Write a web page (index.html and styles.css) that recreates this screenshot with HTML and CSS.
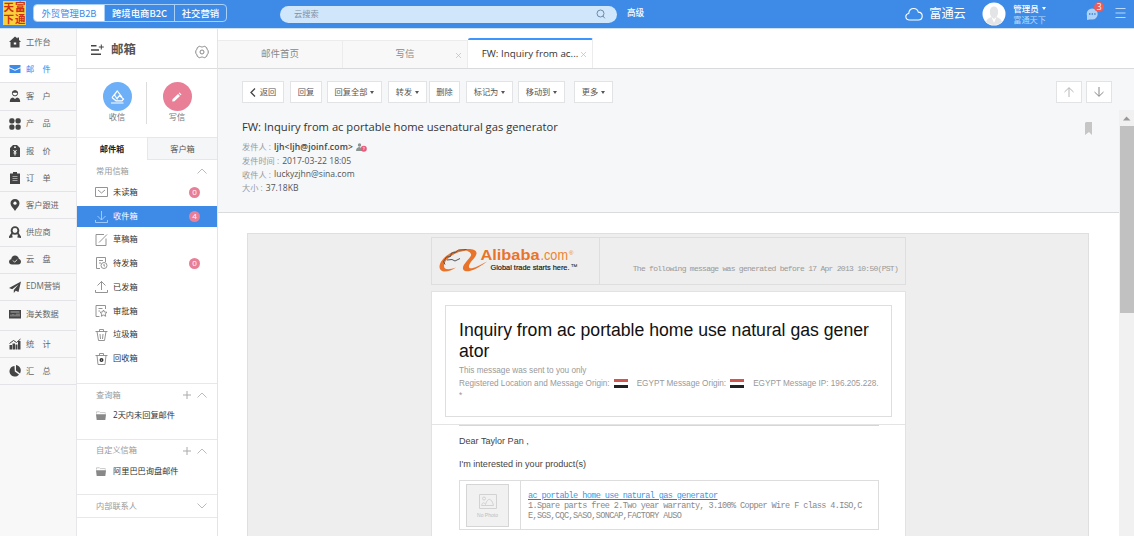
FILE: index.html
```html
<!DOCTYPE html>
<html lang="zh-CN">
<head>
<meta charset="utf-8">
<title>邮箱</title>
<link rel="stylesheet" href="styles.css">
</head>
<body>
<header class="top">
  <div class="brand"><span>天</span><span>富</span><span>下</span><span>通</span></div>
  <nav class="modes"><a class="mode m1 on">外贸管理B2B</a><a class="mode m2">跨境电商B2C</a><a class="mode m3">社交营销</a></nav>
  <div class="search"><span>云搜索</span><svg width="10" height="10" viewBox="0 0 10 10" fill="none" stroke="#6f8ba8"><circle cx="4.5" cy="4.5" r="3.5"/><path d="M6.8 6.8 8.8 9.3"/></svg></div>
  <span class="adv">高级</span>
  <svg class="cloud" width="18" height="14" viewBox="0 0 18 14" fill="none" stroke="#fff" stroke-width="1.1"><path d="M4.5 13C2.3 13 .8 11.700.8 9.700.8 7.900 2 6.700 3.700 6.500 4 3.700 6 1.500 8.700 1.500c2.300 0 4 1.400 4.600 3.600 2.400.1 3.900 1.700 3.900 3.900 0 2.400-1.600 4-3.900 4z"/></svg>
  <span class="cloudname">富通云</span>
  <svg class="avatar" width="24" height="24" viewBox="0 0 24 24"><circle cx="12" cy="12" r="11.500" fill="#fff"/><path d="M4 20c1-3.500 4-4.300 5.500-5C7 12 7 4.500 12 4.500s5 7.500 2.500 10.500c1.500.7 4.500 1.500 5.500 5-4 4-12 4-16 0z" fill="#e3e4e6"/><path d="m9.500 15 2.500 6 2.500-6-2.500 2z" fill="#fff"/></svg>
  <div class="user"><b>管理员<i class="caret"></i></b><span>富通天下</span></div>
  <div class="msg"><svg width="13" height="13" viewBox="0 0 13 13"><circle cx="6.200" cy="6" r="5.500" fill="#aed3f8"/><path d="M1 7v5l5-1z" fill="#aed3f8"/><path d="M3 6h1.400M5.600 6H7M8.200 6h1.400" stroke="#3d7fd0" stroke-width="1.400"/></svg><em>3</em></div>
  <svg class="burger" width="11" height="12" viewBox="0 0 11 12" stroke="#b9dafb"><path d="M.5 1.500h10M.5 6h10M.5 10.500h10"/></svg>
</header>
<div class="app">
  <nav class="side">
    <a><svg viewBox="0 0 12 12"><path d="M6 .5 0 6h1.500v5.500h9V6H12L10 4V1.500H8.500v1z"/><path d="M4.800 6.500h2.400v2H4.800z" fill="#fff"/></svg>工作台</a>
    <a class="on"><svg viewBox="0 0 12 12"><path d="M.5 2h11v2.200L6 6.800.5 4.200z"/><path d="M.5 5.200 6 7.800l5.500-2.600V10H.5z"/></svg>邮　件</a>
    <a><svg viewBox="0 0 12 12"><circle cx="6" cy="3.300" r="2.600" fill="#fff" stroke="#444"/><path d="M3.200 3C3-.3 9-.3 8.800 3 7 3 6 2.500 3.200 3zM.8 12c0-3 1-4.300 3.200-4.600L6 9l2-1.600c2.200.3 3.200 1.600 3.200 4.600z"/></svg>客　户</a>
    <a><svg viewBox="0 0 12 12"><rect x=".3" y=".3" width="5.200" height="5.200" rx="1.900"/><rect x="6.500" y=".3" width="5.200" height="5.200" rx="1.900"/><rect x=".3" y="6.500" width="5.200" height="5.200" rx="1.900"/><rect x="6.500" y="6.500" width="5.200" height="5.200" rx="1.900"/></svg>产　品</a>
    <a><svg viewBox="0 0 12 12"><path d="M1 3 4 0h4l3 3v9H1z"/><circle cx="6" cy="2.200" r=".9" fill="#fff"/><path d="m4.500 5 1.500 2 1.500-2M6 7v3.500M4.500 8h3" stroke="#fff" fill="none"/></svg>报　价</a>
    <a><svg viewBox="0 0 12 12"><path d="M1 1.500h3V0h4v1.500h3V12H1z"/><path d="M3.500 4.500h5M3.500 6.500h5M3.500 8.500h5" stroke="#bbb" stroke-width=".8"/></svg>订　单</a>
    <a><svg viewBox="0 0 12 12"><path d="M6 0C3.300 0 1.500 1.900 1.500 4.300 1.500 7 4 9 6 12c2-3 4.500-5 4.500-7.700C10.500 1.900 8.700 0 6 0z"/><circle cx="6" cy="4.200" r="1.600" fill="#fff"/></svg>客户跟进</a>
    <a><svg viewBox="0 0 12 12" fill="none" stroke="#444" stroke-width="1.900"><circle cx="6" cy="4.500" r="3.400"/><path d="M3.400 7 1 10.800l2.500-.3M8.600 7l2.400 3.800-2.500-.3"/></svg>供应商</a>
    <a><svg viewBox="0 0 12 12"><path d="M3 10.500C1.200 10.500 0 9.300 0 7.800c0-1.400.9-2.400 2.200-2.600C2.400 3 4 1.500 6 1.500s3.600 1.300 3.900 3.500C11.200 5.200 12 6.300 12 7.700c0 1.600-1.200 2.800-2.900 2.800z"/><path d="m4 6.500 1.600 1.700L8.300 5.500" stroke="#ddd" fill="none"/></svg>云　盘</a>
    <a><svg viewBox="0 0 12 12"><path d="M12 .5 0 7l3.200 1.200L9.500 3.500 4.800 9v3l1.900-2.200L9.500 11z"/></svg>EDM营销</a>
    <a class="tall"><svg viewBox="0 0 12 12"><path d="M0 2h12v8.500H0z"/><path d="M1.500 4h9M2 8.500V6.500M4 8.500V6M6 8.500V6.500M8 8.500v-3M10 8.500v-3" stroke="#ccc" stroke-width=".8"/></svg>海关数据</a>
    <a><svg viewBox="0 0 12 12"><path d="M.5 7H3v4.500H.5zM3.500 5.500H6v6H3.500zM6.500 6.500h2v5h-2zM9 3h2.500v8.500H9z"/><path d="m.5 5.500 4-3 3 2 4-3.500" fill="none" stroke="#444"/></svg>统　计</a>
    <a><svg viewBox="0 0 12 12"><path d="M5.500 1A5.300 5.300 0 1 0 10 9.500L5.800 6.500z"/><path d="M7 0v5.500l4 3C13 5 11 .5 7 0z"/></svg>汇　总</a>
  </nav>
  <section class="box">
    <div class="boxhead"><svg width="14" height="12" viewBox="0 0 14 12" stroke="#444" stroke-width="1.500" fill="none"><path d="M0 1.800h5.500M0 6h8M0 10.200h10"/><path d="M10.300.5v5M7.800 3h5" stroke-width="1"/></svg><h1>邮箱</h1><svg class="gear" width="14" height="14" viewBox="0 0 14 14" fill="none" stroke="#888"><path d="m4.300 1.300 1.200.3c1 .5 2 .5 3 0l1.200-.3 2 1.400.4 1.500 1.100 1.600v2.400l-1.100 1.600-.4 1.500-2 1.400-1.200-.3c-1-.5-2-.5-3 0l-1.200.3-2-1.400-.4-1.500L.8 8.200V5.800l1.100-1.600.4-1.500z"/><circle cx="7" cy="7" r="2"/></svg></div>
    <div class="acts">
      <div class="act recv"><i><svg width="16" height="16" viewBox="0 0 16 16" fill="none" stroke="#fff" stroke-width="1.200"><path d="M3 8.500 8.200 2l4.800 6M8.200 2 5.500 6l3 4.500M3 8.500l4 3.300h6L14.500 10l-4-3.500L8 9.500M2 14h12.500"/></svg></i>收信</div>
      <div class="act send"><i><svg width="12" height="12" viewBox="0 0 12 12" fill="#fff"><path d="M1.500 8.300 7 3l2 2-5.500 5.300-2.300.3zM7.700 2.300l.8-.8 2 2-.8.8z"/></svg></i>写信</div>
    </div>
    <div class="boxtabs"><b>邮件箱</b><span>客户箱</span></div>
    <div class="grp"><span>常用信箱</span><svg class="chev" viewBox="0 0 10 6"><path d="M.5 5.500 5 1l4.500 4.500"/></svg></div>
    <ul class="list">
      <li><svg viewBox="0 0 13 12"><path d="M.5 1.500h12v9H.5zM3 4l3.500 3L10 4"/></svg>未读箱<em>0</em></li>
      <li class="on"><svg viewBox="0 0 13 12"><path d="M6.500 0v9M2.500 5l4 4 4-4M.5 9v2.500h12V9"/></svg>收件箱<em>4</em></li>
      <li><svg viewBox="0 0 13 12"><path d="M9 .5H1v11h10V4.500M4 8.500l8-8"/></svg>草稿箱</li>
      <li><svg viewBox="0 0 13 12"><path d="M5 11.500H1.500V.5h9V5M4 3.500h4M4 6h2"/><circle cx="9" cy="8.500" r="3"/><path d="M9 7v2h1"/></svg>待发箱<em>0</em></li>
      <li><svg viewBox="0 0 13 12"><path d="M6.500 9V.5M2.500 4.500l4-4 4 4M.5 9v2.500h12V9"/></svg>已发箱</li>
      <li><svg viewBox="0 0 13 12"><path d="M4.500 11.500H1V.5h9.500V4M3.500 3.500h4M3.500 6h1.500M8.500 5l1 2 2.500.3-1.800 1.600.5 2.400-2.200-1.200-2.200 1.200.5-2.400L5 7.300 7.500 7z"/></svg>审批箱</li>
      <li><svg viewBox="0 0 13 12"><path d="M.5 2.500h12M4.500 2.500v-2h4v2M2 2.500l1.500 9h6l1.500-9M5 5l.5 5M8 5l-.5 5"/></svg>垃圾箱</li>
      <li><svg viewBox="0 0 13 12"><path d="M.5 2.500h12M4.500 2.500v-2h4v2M2 2.500l1 9h7l1-9"/><circle cx="6.500" cy="7" r="1.300" stroke="#333" stroke-width="1.400"/></svg>回收箱</li>
    </ul>
    <div class="custom">
      <div class="grp"><span>查询箱</span><svg class="plus" viewBox="0 0 8 8"><path d="M4 0v8M0 4h8"/></svg><svg class="chev" viewBox="0 0 10 6"><path d="M.5 5.500 5 1l4.500 4.500"/></svg></div>
      <div class="fold"><svg viewBox="0 0 10 9"><path d="M.5 2.500V.8h3l.8.8h5v1" fill="none" stroke="#bbb" stroke-width=".8"/><path d="M0 3.200h10L9.300 9H.7z" fill="#888"/></svg>2天内未回复邮件</div>
    </div>
    <div class="custom">
      <div class="grp"><span>自定义信箱</span><svg class="plus" viewBox="0 0 8 8"><path d="M4 0v8M0 4h8"/></svg><svg class="chev" viewBox="0 0 10 6"><path d="M.5 5.500 5 1l4.500 4.500"/></svg></div>
      <div class="fold"><svg viewBox="0 0 10 9"><path d="M.5 2.500V.8h3l.8.8h5v1" fill="none" stroke="#bbb" stroke-width=".8"/><path d="M0 3.200h10L9.300 9H.7z" fill="#888"/></svg>阿里巴巴询盘邮件</div>
    </div>
    <div class="custom last"><div class="grp"><span>内部联系人</span><svg class="chev" viewBox="0 0 10 6"><path d="M.5.500 5 5 9.500.5"/></svg></div></div>
  </section>
  <main class="main">
    <div class="tabs"><div class="tab">邮件首页</div><div class="tab">写信<svg viewBox="0 0 5 5"><path d="m0 0 5 5M5 0 0 5"/></svg></div><div class="tab on"><span>FW: Inquiry from ac...</span><svg viewBox="0 0 5 5"><path d="m0 0 5 5M5 0 0 5"/></svg></div></div>
    <div class="tools">
      <a class="b1"><svg width="6" height="9" viewBox="0 0 6 9" fill="none" stroke="#444" stroke-width="1.300"><path d="M5 .5 1 4.500l4 4"/></svg>返回</a><a class="b2">回复</a><a class="b3">回复全部<i class="caret"></i></a><a class="b4">转发<i class="caret"></i></a><a class="b5">删除</a><a class="b6">标记为<i class="caret"></i></a><a class="b7">移动到<i class="caret"></i></a><a class="b8">更多<i class="caret"></i></a>
      <a class="nav up"><svg viewBox="0 0 10 10"><path d="M5 10V.8M.5 5 5 .7 9.500 5"/></svg></a><a class="nav"><svg viewBox="0 0 10 10"><path d="M5 0v9.200M.5 5 5 9.300 9.500 5"/></svg></a>
    </div>
    <div class="pane">
      <div class="scroll">
        <div class="mhead">
          <svg class="mark" viewBox="0 0 7 13"><path d="M1 0h6v13l-3-3-4 3V1z" fill="#c6c6c6"/></svg>
          <h2>FW: Inquiry from ac portable home usenatural gas generator</h2>
          <p>发件人 : <b>ljh&lt;ljh@joinf.com&gt;</b><svg width="11" height="9" viewBox="0 0 11 9"><circle cx="3.500" cy="2" r="1.700" fill="#8b9590"/><path d="M0 8c0-3 2-4 3.500-4L6 5.500V8z" fill="#8b9590"/><circle cx="7.800" cy="5.700" r="3" fill="#ea5a7c"/><path d="M7 5c0-1 1.700-1 1.500 0l-.7.800v1" stroke="#fff" stroke-width=".6" fill="none"/></svg></p>
          <p>发件时间 : <span>2017-03-22 18:05</span></p>
          <p>收件人 : <span>luckyzjhn@sina.com</span></p>
          <p>大小 : <span>37.18KB</span></p>
        </div>
        <div class="mail">
          <div class="banner">
            <div class="logo"><svg width="150" height="46" viewBox="0 0 150 46">
              <path d="M35 12.500C24 8.500 8 20 7.500 28.500c0 7 9 6 16.500 1-7 2.500-12 2.500-12-1.500C12 22 22 13.500 35 12.500z" fill="#e8742c"/>
              <path d="M31 11.200c8-1 14 .3 13.500 4.300-.5 4.500-8 9-7.500 13.500.3 3.500 9-.5 18-5.500-9 7-20 12.500-23.500 8.500-3-4.500 6-10.500 7.500-14.500.8-3-3-4.500-8-6.300z" fill="#e8742c"/>
              <path d="M13 26.500l-1.500-3 3-4.500 4-.5 1-3.500 4-.5 3-2.500 8-.5M15 22l5-.5 3 1.500 5-2.500" stroke="#555" fill="none" stroke-width="1"/>
              <text x="48.500" y="21.500" class="ali" textLength="59" lengthAdjust="spacingAndGlyphs">Alibaba</text><text x="108.500" y="21.500" class="com" textLength="27.500" lengthAdjust="spacingAndGlyphs">.com</text><text x="137" y="17" class="reg">®</text>
              <text x="58.500" y="32" class="slogan" textLength="79" lengthAdjust="spacingAndGlyphs">Global trade starts here.</text><text x="138.500" y="31" class="tm">™</text></svg></div>
            <div class="gen">The following message was generated before 17 Apr 2013 10:50(PST)</div>
          </div>
          <div class="letter">
            <div class="intro">
              <h3>Inquiry from ac portable home use natural gas gener<br>ator</h3>
              <p>This message was sent to you only</p>
              <p class="loc"><span>Registered Location and Message Origin:</span><i class="flag"></i><span>EGYPT Message Origin:</span><i class="flag"></i><span>EGYPT Message IP: 196.205.228.</span></p>
              <p>*</p>
            </div>
            <div class="body">
              <p class="dear">Dear Taylor Pan ,</p>
              <p class="int">I'm interested in your product(s)</p>
              <div class="prod">
                <div class="ph"><div><svg width="18" height="15" viewBox="0 0 18 15" fill="none" stroke="#d2d2d2"><path d="M.5.500h17v14H.5zM2.500 11.500c1-4 3-3 4-1 2-7 6-7 8 1z"/><circle cx="5" cy="4.500" r="1.500"/></svg><span>No Photo</span></div></div>
                <div class="desc"><a>ac portable home use natural gas generator</a><br>1.Spare parts free 2.Two year warranty, 3.100% Copper Wire F class 4.ISO,C<br>E,SGS,CQC,SASO,SONCAP,FACTORY AUSO</div>
              </div>
            </div>
          </div>
        </div>
      </div>
      <div class="bar"><svg width="15" height="16" viewBox="0 0 15 16"><path d="M4 10.500 7.500 6.500l4 4z" fill="#999"/></svg><i></i></div>
    </div>
  </main>
</div>
</body>
</html>
```
FILE: styles.css
```css
* { box-sizing: border-box; }
body, h1, h2, h3, p, ul { margin: 0; padding: 0; font-weight: normal; }
i, em { font-style: normal; }
svg { display: block; flex: none; }
body {
  width: 1134px; height: 536px; overflow: hidden; background: #fff; color: #555;
  font: 8.2px/1.3 "Open Sans", "Noto Sans CJK SC", sans-serif;
}
.caret { display: inline-block; border: 2.500px solid transparent; border-top: 3px solid currentColor; border-bottom: 0; margin-left: 3px; }

/* Top bar */
.top { display: flex; align-items: center; height: 29px; background: #3d8be7; border-bottom: 1px solid #cfe0ee; color: #fff; }
.brand { display: grid; grid-template: 12px 12px / 1fr 1fr; place-items: center; width: 23px; height: 24px; margin: -2px 0 0 3px; background: #f9cf3c; color: #cf2f14; font: bold 10.500px/12px "Noto Sans CJK SC", sans-serif; }
.modes { display: flex; width: 194px; height: 18px; margin: -3px 0 0 7px; border: 1px solid #a9d0f8; border-radius: 4px; font: 500 9.400px/16px "Noto Sans CJK SC", sans-serif; text-align: center; }
.mode { white-space: nowrap; border-left: 1px solid #a9d0f8; }
.m1 { width: 70px; border: 0; border-radius: 3px 0 0 3px; }
.m2 { width: 70px; }
.m3 { flex: 1; }
.mode.on { background: #fff; color: #3d8be7; font-weight: 400; }
.search { display: flex; align-items: center; justify-content: space-between; width: 337px; height: 17px; margin: 0 0 0 53px; padding: 0 11px 0 14px; border-radius: 9px; background: #d0e6fb; color: #8291a0; }
.adv { margin-left: 10px; font-weight: 500; font-size: 8.600px; }
.cloud { margin-left: 261px; }
.cloudname { margin-left: 6px; width: 44px; font-size: 12.200px; white-space: nowrap; }
.avatar { margin-left: 9px; margin-top: -1px; }
.user { display: flex; flex-direction: column; width: 60px; margin-left: 7px; line-height: 11.500px; color: #b8d9fa; font-size: 8.200px; }
.user b { font-weight: 500; color: #fff; font-size: 8.500px; display: flex; align-items: center; }
.msg { position: relative; width: 18px; margin-left: 13px; }
.msg em { position: absolute; left: 8px; top: -6px; width: 10px; height: 10px; border-radius: 5px; background: #ef5b57; font-size: 8.500px; line-height: 10px; text-align: center; }
.burger { margin-left: 11px; margin-top: -3px; }

.app { display: flex; height: 507px; }

/* Module navigation */
.side { width: 77px; background: #f8f8f8; border-right: 1px solid #e6e7ea; }
.side a { display: flex; align-items: center; height: 27.200px; padding-left: 9px; border-bottom: 1px solid #e3e3e8; color: #666; white-space: nowrap; }
.side a svg { width: 12px; height: 12px; margin-right: 5px; fill: #444; }
.side a svg[fill="none"] { fill: none; }
.side a.on { background: #fff; color: #3d7ff0; }
.side a.on svg { fill: #3d8be7; }
.side a.tall { height: 30px; padding-bottom: 2px; }

/* Mailbox column */
.box { width: 141px; border-right: 1px solid #e3e4e6; }
.boxhead { display: flex; align-items: center; height: 40px; padding: 3px 8px 0 14px; border-bottom: 1px solid #dcdcdc; }
.boxhead h1 { margin-left: 6px; font-size: 12.400px; font-weight: 700; color: #555; flex: 1; }
.boxhead .gear { margin-top: 4px; }
.acts { display: flex; height: 68px; padding: 13px 0 0; }
.act { display: flex; flex-direction: column; align-items: center; height: 42px; line-height: 12px; color: #777; }
.act i { display: grid; place-items: center; width: 29px; height: 29px; border-radius: 50%; background: #6db0f8; }
.recv { width: 70px; padding-left: 11px; border-right: 1px solid #ddd; }
.send { width: 60px; }
.send i { background: #e87f97; }
.boxtabs { display: flex; height: 23px; line-height: 22px; text-align: center; }
.boxtabs b { width: 70px; font-weight: 700; color: #222; border-top: 1px solid #eee; }
.boxtabs span { flex: 1; background: #f5f6f8; border: solid #e6e7e9; border-width: 1px 0 1px 1px; }
.grp { display: flex; align-items: center; height: 22px; padding: 0 10px 0 19px; color: #999; }
.grp span { flex: 1; }
.chev { width: 10px; height: 6px; fill: none; stroke: #aaa; stroke-width: .8; }
.plus { width: 8px; height: 8px; margin-right: 6px; stroke: #aaa; }
.list { list-style: none; margin-top: -1.900px; height: 203px; }
.list li { display: flex; align-items: center; height: 23.800px; padding: 0 17px 0 18px; color: #333; }
.list li svg { width: 13px; height: 12px; margin-right: 5px; fill: none; stroke: #888; stroke-width: .9; }
.list em { margin-left: auto; width: 11px; height: 11px; border-radius: 6px; background: #e87f97; color: #fff; font-size: 8px; line-height: 10.500px; text-align: center; }
.list li.on { height: 21.500px; margin: 2px 0 .3px; background: #3d8be7; color: #fff; }
.list li.on svg { stroke: #a5d0ff; }
.custom { height: 55.600px; border-top: 1px solid #e8e8e8; }
.custom.last { height: 23.500px; border-bottom: 1px solid #e8e8e8; }
.fold { display: flex; align-items: center; height: 19px; padding-left: 19px; color: #333; }
.fold svg { width: 10px; height: 9px; margin-right: 7px; }

/* Reading area */
.main { flex: 1; display: flex; flex-direction: column; min-width: 0; }
.tabs { display: flex; align-items: flex-end; height: 40px; border-bottom: 1px solid #d8dadc; }
.tab { display: flex; align-items: center; justify-content: center; position: relative; width: 125px; height: 28px; border: solid #ececec; border-width: 1px 1px 0 0; background: #f8f8f8; color: #888; font-size: 9.500px; }
.tab svg { position: absolute; right: 6px; top: 12px; width: 5px; height: 5px; stroke: #bbb; stroke-width: .7; }
.tab.on { height: 30px; background: #fff; color: #333; border-top: 2px solid #3d96fc; border-radius: 2px 2px 0 0; }
.tab.on span { font-size: 9.800px; white-space: nowrap; }
.tools { display: flex; height: 41px; padding: 12px 22px 0 24px; background: #f5f7f9; }
.tools a { display: flex; align-items: center; justify-content: center; height: 22px; border: 1px solid #e1e3e5; background: #fff; color: #555; white-space: nowrap; }
.tools .b1 { width: 42px; margin-right: 6px; gap: 4px; }
.b2 { width: 32px; margin-right: 5px; }
.b3 { width: 55px; margin-right: 6px; }
.b4 { width: 39px; margin-right: 2px; }
.b5 { width: 31px; margin-right: 6px; }
.b6 { width: 47px; margin-right: 5px; }
.b7 { width: 47px; margin-right: 9px; }
.b8 { width: 39px; }
.tools .nav { width: 26px; margin-left: 4px; }
.tools .up { margin-left: auto; }
.nav svg { width: 10px; height: 10px; fill: none; stroke: #888; }
.up svg { stroke: #b5b5b5; }
.pane { flex: 1; display: flex; min-height: 0; }
.scroll { flex: 1; overflow: hidden; }
.bar { width: 15px; background: #f1f1f1; padding-left: 1px; }
.bar svg { margin-left: -1px; }
.bar i { display: block; height: 187px; background: #c1c1c1; }
.mhead { position: relative; height: 103px; padding: 8px 0 0 24px; background: #f5f7f9; border-bottom: 1px solid #d9dbdd; }
.mark { position: absolute; right: 27px; top: 12px; width: 7px; height: 13px; }
.mhead h2 { height: 23px; font-size: 11.200px; line-height: 17px; color: #333; letter-spacing: 0; }
.mhead p { display: flex; align-items: center; height: 13.600px; color: #999; white-space: pre; }
.mhead p b, .mhead p span { color: #555; font-size: 8.600px; margin-left: 1px; }
.mhead p b { font-weight: 600; color: #444; letter-spacing: .13px; }
.mhead p svg { margin-left: 3px; }

/* Message content */
.mail { width: 842px; height: 400px; margin: 20px 0 0 29px; padding: 3px 0 0 183px; background: #eee; border: 1px solid #dfdfdf; font-family: "Liberation Sans", Arial, sans-serif; }
.banner { display: flex; width: 475px; height: 48px; border: 1px solid #dedede; }
.logo { width: 168px; border-right: 1px solid #dedede; }
.ali { font: bold 14px "Liberation Sans", sans-serif; fill: #e8742c; }
.com { font: 14px "Liberation Sans", sans-serif; fill: #ee8330; }
.reg { font: 6px "Liberation Sans", sans-serif; fill: #ee8330; }
.slogan { font: 7.600px "Liberation Sans", sans-serif; fill: #111; stroke: #111; stroke-width: .15px; }
.tm { font: 7px "Liberation Sans", sans-serif; fill: #111; }
.gen { flex: 1; padding: 25px 7px 0 0; text-align: right; font: 8px/11px "Liberation Mono", monospace; letter-spacing: -.720px; color: #999; white-space: nowrap; }
.letter { width: 475px; height: 300px; margin-top: 6px; padding-top: 13px; background: #fff; border: 1px solid #e2e2e2; }
.intro { width: 447px; height: 112px; margin: 0 0 7px 13px; padding: 14px 0 0 13px; border: 1px solid #dedede; color: #999; font-size: 8.200px; white-space: nowrap; }
.intro h3 { font-size: 17.650px; line-height: 21px; color: #111; margin-bottom: 3px; }
.intro p { height: 12.500px; line-height: 12.500px; }
.loc { display: flex; align-items: center; }
.flag { width: 14px; height: 9px; margin: 0 9px 0 4px; background: linear-gradient(#d05650 33%, #fff 33% 66%, #222 66%); }
.body { border-top: 1px solid #e4e4e4; padding-left: 27px; color: #444; font-size: 9.050px; }
.body::before { content: ""; display: block; width: 420px; height: 1px; background: #d6d6d6; }
.dear { padding-top: 9px; line-height: 13px; }
.int { padding-top: 10px; line-height: 13px; }
.prod { display: flex; width: 420px; height: 50px; margin-top: 9px; border: 1px solid #ddd; }
.ph { width: 61px; padding: 3px 0 0 6px; border-right: 1px solid #ddd; }
.ph div { display: flex; flex-direction: column; align-items: center; width: 43px; height: 43px; padding-top: 9px; background: #f1f1f1; border: 1px solid #d5d5d5; font-size: 5px; color: #bbb; }
.ph span { margin-top: 3px; }
.desc { padding: 10px 0 0 7px; font: 8.500px/10px "Liberation Mono", monospace; letter-spacing: -.590px; color: #888; white-space: nowrap; }
.desc a { color: #3a98e8; text-decoration: underline; text-decoration-color: #5a5af0; }
```
